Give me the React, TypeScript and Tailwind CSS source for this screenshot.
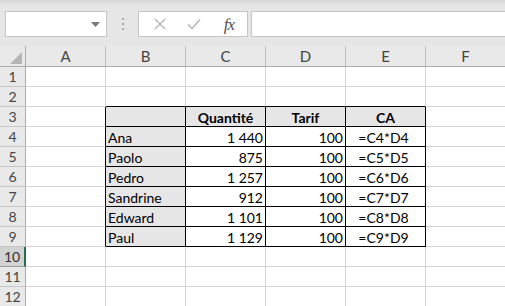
import React from "react";

const COLS = ["A", "B", "C", "D", "E", "F"];

type Row = { name: string; qty: string; tarif: string; ca: string };

const DATA: Row[] = [
  { name: "Ana", qty: "1 440", tarif: "100", ca: "=C4*D4" },
  { name: "Paolo", qty: "875", tarif: "100", ca: "=C5*D5" },
  { name: "Pedro", qty: "1 257", tarif: "100", ca: "=C6*D6" },
  { name: "Sandrine", qty: "912", tarif: "100", ca: "=C7*D7" },
  { name: "Edward", qty: "1 101", tarif: "100", ca: "=C8*D8" },
  { name: "Paul", qty: "1 129", tarif: "100", ca: "=C9*D9" },
];

function FormulaBar() {
  return (
    <div className="relative h-[46px] bg-[#e6e6e6]">
      <div className="h-[5px] bg-gradient-to-b from-[#d6d6d6] to-[#e6e6e6]" />
      <div className="flex items-stretch pl-[5px] pt-[6px]">
        {/* Name box */}
        <div className="flex h-[26px] w-[102px] items-center justify-end border border-[#c6c6c6] bg-white pr-[6px]">
          <svg width="9" height="5" viewBox="0 0 9 5">
            <path d="M0 0 L9 0 L4.5 5 Z" fill="#7a7a7a" />
          </svg>
        </div>
        {/* Separator dots */}
        <div className="flex w-[31px] flex-col items-center justify-center gap-[3px]">
          <span className="h-[2px] w-[2px] bg-[#a8a8a8]" />
          <span className="h-[2px] w-[2px] bg-[#a8a8a8]" />
          <span className="h-[2px] w-[2px] bg-[#a8a8a8]" />
        </div>
        {/* Buttons */}
        <div className="flex h-[26px] w-[110px] items-center border border-[#c6c6c6] bg-white">
          <div className="flex w-[38px] justify-center pl-[4px]">
            <svg width="12" height="12" viewBox="0 0 12 12">
              <path d="M1 1 L11 11 M11 1 L1 11" stroke="#b4b4b4" strokeWidth="1.4" fill="none" />
            </svg>
          </div>
          <div className="flex w-[34px] justify-center">
            <svg width="14" height="12" viewBox="0 0 14 12">
              <path d="M1 6.5 L5 10.5 L13 1.5" stroke="#b4b4b4" strokeWidth="1.4" fill="none" />
            </svg>
          </div>
          <div
            className="flex flex-1 justify-center text-[17px] italic text-[#505050]"
            style={{ fontFamily: '"Liberation Serif", serif' }}
          >
            <span className="tracking-[-1px]">fx</span>
          </div>
        </div>
        <div className="ml-[3px] h-[26px] flex-1 border border-r-0 border-[#c6c6c6] bg-white" />
      </div>
    </div>
  );
}

function ColumnHeader() {
  return (
    <div className="flex h-[21px] border-b border-[#ababab] bg-[#e9e9e9] text-[#444]">
      <div className="relative w-[26px] shrink-0 border-r border-[#ababab]">
        <svg className="absolute bottom-[2px] right-[3px]" width="12" height="12" viewBox="0 0 12 12">
          <path d="M12 0 L12 12 L0 12 Z" fill="#b5b5b5" />
        </svg>
      </div>
      {COLS.map((c) => (
        <div
          key={c}
          className="flex w-[80px] shrink-0 items-center justify-center border-r border-[#c0c0c0] text-[15px]"
        >
          {c}
        </div>
      ))}
    </div>
  );
}

function RowHeader({ n }: { n: number }) {
  const active = n === 10;
  return (
    <div
      className={
        active
          ? "flex w-[26px] shrink-0 items-center justify-center border-b border-r-2 border-b-[#9f9f9f] border-r-[#217346] bg-[#d2d2d2] text-[14px] text-[#333]"
          : "flex w-[26px] shrink-0 items-center justify-center border-b border-r border-b-[#c6c6c6] border-r-[#ababab] bg-[#e9e9e9] text-[14px] text-[#444]"
      }
    >
      {n}
    </div>
  );
}

function SheetRow({ n }: { n: number }) {
  const inTable = n >= 3 && n <= 9;
  const d = n >= 4 && n <= 9 ? DATA[n - 4] : null;
  const gridCell = "w-[80px] shrink-0 border-b border-r border-[#d4d4d4]";
  const aboveTable = n === 2;

  return (
    <div className="flex h-[20px]">
      <RowHeader n={n} />
      {/* A */}
      <div
        className={
          inTable
            ? "w-[80px] shrink-0 border-b border-r border-b-[#d4d4d4] border-r-black"
            : gridCell
        }
      />
      {inTable ? (
        <>
          <div className="flex w-[80px] shrink-0 items-end border-b border-r border-black bg-[#e7e6e6] pb-px pl-[2px]">
            {d ? d.name : ""}
          </div>
          {n === 3 ? (
            <>
              <div className="flex w-[80px] shrink-0 items-end justify-center border-b border-r border-black bg-[#e7e6e6] pb-px font-bold">
                Quantité
              </div>
              <div className="flex w-[80px] shrink-0 items-end justify-center border-b border-r border-black bg-[#e7e6e6] pb-px font-bold">
                Tarif
              </div>
              <div className="flex w-[80px] shrink-0 items-end justify-center border-b border-r border-black bg-[#e7e6e6] pb-px font-bold">
                CA
              </div>
            </>
          ) : (
            <>
              <div className="flex w-[80px] shrink-0 items-end justify-end border-b border-r border-black bg-white pb-px pr-[2px]">
                {d?.qty}
              </div>
              <div className="flex w-[80px] shrink-0 items-end justify-end border-b border-r border-black bg-white pb-px pr-[2px]">
                {d?.tarif}
              </div>
              <div className="flex w-[80px] shrink-0 items-end justify-center border-b border-r border-black bg-white pb-px pr-[4px]">
                {d?.ca}
              </div>
            </>
          )}
          <div className={gridCell} />
        </>
      ) : (
        COLS.slice(1).map((c) => (
          <div
            key={c}
            className={
              aboveTable && c !== "F"
                ? "w-[80px] shrink-0 border-b border-r border-b-black border-r-[#d4d4d4]"
                : gridCell
            }
          />
        ))
      )}
    </div>
  );
}

export default function App() {
  const rows = Array.from({ length: 12 }, (_, i) => i + 1);
  return (
    <div
      className="h-[306px] w-[505px] overflow-hidden bg-white text-[14px] leading-none text-black"
      style={{ fontFamily: 'Lato, "Liberation Sans", sans-serif' }}
    >
      <FormulaBar />
      <ColumnHeader />
      {rows.map((n) => (
        <SheetRow key={n} n={n} />
      ))}
    </div>
  );
}
